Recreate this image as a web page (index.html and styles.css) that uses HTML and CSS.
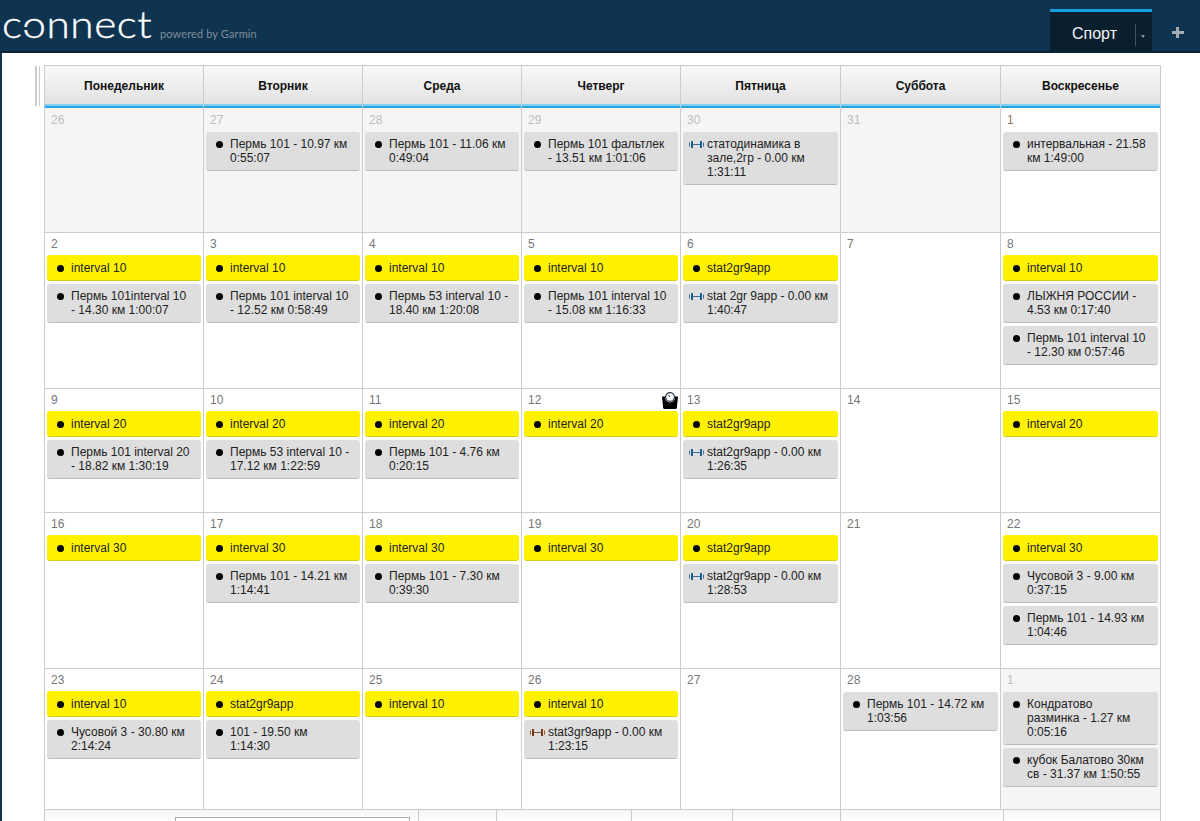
FILE: index.html
```html
<!DOCTYPE html>
<html lang="ru">
<head>
<meta charset="utf-8">
<title>Garmin Connect</title>
<link rel="stylesheet" href="styles.css">
</head>
<body>
<svg class="defs" width="0" height="0" aria-hidden="true">
  <symbol id="db" viewBox="0 0 15 7">
    <rect x="0" y="1.5" width="1" height="4" opacity=".85"/><rect x="2" y="0" width="2" height="7"/>
    <rect x="4" y="3" width="7" height="1" opacity=".85"/>
    <rect x="11" y="0" width="2" height="7"/><rect x="14" y="1.5" width="1" height="4" opacity=".85"/>
  </symbol>
</svg>
<header class="nav">
  <div class="brand"><span class="logo">c<span class="logo-o">o</span>nnect</span><span class="powered">powered by Garmin</span></div>
  <div class="tab"><span class="tab-label">Спорт</span><span class="tab-sep"></span><span class="tab-caret"></span></div>
  <div class="plus"><span class="plus-h"></span><span class="plus-v"></span></div>
</header>
<div class="peek"><i class="p1"></i><i class="p2"></i><i class="p3"></i><i class="p4"></i></div>
<main class="page">
  <div class="handle"></div>
  <div class="cal">
    <div class="head">Понедельник</div><div class="head">Вторник</div><div class="head">Среда</div><div class="head">Четверг</div><div class="head">Пятница</div><div class="head">Суббота</div><div class="head last">Воскресенье</div>

    <div class="cell past r1"><div class="num">26</div></div>
    <div class="cell past r1"><div class="num">27</div><div class="item dot">Пермь 101 - 10.97 км 0:55:07</div></div>
    <div class="cell past r1"><div class="num">28</div><div class="item dot">Пермь 101 - 11.06 км 0:49:04</div></div>
    <div class="cell past r1"><div class="num">29</div><div class="item dot">Пермь 101 фальтлек<br>- 13.51 км 1:01:06</div></div>
    <div class="cell past r1"><div class="num">30</div><div class="item gym"><svg class="db"><use href="#db"/></svg>статодинамика в зале,2гр - 0.00 км 1:31:11</div></div>
    <div class="cell past r1"><div class="num">31</div></div>
    <div class="cell last r1"><div class="num dark">1</div><div class="item dot">интервальная - 21.58 км 1:49:00</div></div>

    <div class="cell r2"><div class="num">2</div><div class="item plan">interval 10</div><div class="item dot">Пермь 101interval 10<br>- 14.30 км 1:00:07</div></div>
    <div class="cell r2"><div class="num">3</div><div class="item plan">interval 10</div><div class="item dot">Пермь 101 interval 10 - 12.52 км 0:58:49</div></div>
    <div class="cell r2"><div class="num">4</div><div class="item plan">interval 10</div><div class="item dot">Пермь 53 interval 10 - 18.40 км 1:20:08</div></div>
    <div class="cell r2"><div class="num">5</div><div class="item plan">interval 10</div><div class="item dot">Пермь 101 interval 10 - 15.08 км 1:16:33</div></div>
    <div class="cell r2"><div class="num">6</div><div class="item plan">stat2gr9app</div><div class="item gym"><svg class="db"><use href="#db"/></svg>stat 2gr 9app - 0.00 км 1:40:47</div></div>
    <div class="cell r2"><div class="num">7</div></div>
    <div class="cell last r2"><div class="num">8</div><div class="item plan">interval 10</div><div class="item dot">ЛЫЖНЯ РОССИИ - 4.53 км 0:17:40</div><div class="item dot">Пермь 101 interval 10<br>- 12.30 км 0:57:46</div></div>

    <div class="cell r3"><div class="num">9</div><div class="item plan">interval 20</div><div class="item dot">Пермь 101 interval 20 - 18.82 км 1:30:19</div></div>
    <div class="cell r3"><div class="num">10</div><div class="item plan">interval 20</div><div class="item dot">Пермь 53 interval 10 - 17.12 км 1:22:59</div></div>
    <div class="cell r3"><div class="num">11</div><div class="item plan">interval 20</div><div class="item dot">Пермь 101 - 4.76 км 0:20:15</div></div>
    <div class="cell r3 has-scale"><div class="num">12</div>
      <svg class="scale" viewBox="0 0 16 17" aria-hidden="true">
        <path d="M0 4.500h3v1a5 5 0 0 0 10 0v-1h3l-1.200 11.500a1.200 1.200 0 0 1-1.200 1H2.400a1.200 1.200 0 0 1-1.200-1z" fill="#000"/>
        <circle cx="8" cy="5" r="4.400" fill="#fff" stroke="#2a3a4a" stroke-width="1.300"/>
        <path d="M8 5 6.400 2.800" stroke="#2a3a4a" stroke-width="1" fill="none"/>
      </svg>
      <div class="item plan">interval 20</div></div>
    <div class="cell r3"><div class="num">13</div><div class="item plan">stat2gr9app</div><div class="item gym"><svg class="db"><use href="#db"/></svg>stat2gr9app - 0.00 км 1:26:35</div></div>
    <div class="cell r3"><div class="num">14</div></div>
    <div class="cell last r3"><div class="num">15</div><div class="item plan">interval 20</div></div>

    <div class="cell r4"><div class="num">16</div><div class="item plan">interval 30</div></div>
    <div class="cell r4"><div class="num">17</div><div class="item plan">interval 30</div><div class="item dot">Пермь 101 - 14.21 км 1:14:41</div></div>
    <div class="cell r4"><div class="num">18</div><div class="item plan">interval 30</div><div class="item dot">Пермь 101 - 7.30 км 0:39:30</div></div>
    <div class="cell r4"><div class="num">19</div><div class="item plan">interval 30</div></div>
    <div class="cell r4"><div class="num">20</div><div class="item plan">stat2gr9app</div><div class="item gym"><svg class="db"><use href="#db"/></svg>stat2gr9app - 0.00 км 1:28:53</div></div>
    <div class="cell r4"><div class="num">21</div></div>
    <div class="cell last r4"><div class="num">22</div><div class="item plan">interval 30</div><div class="item dot">Чусовой 3 - 9.00 км 0:37:15</div><div class="item dot">Пермь 101 - 14.93 км 1:04:46</div></div>

    <div class="cell r5"><div class="num">23</div><div class="item plan">interval 10</div><div class="item dot">Чусовой 3 - 30.80 км 2:14:24</div></div>
    <div class="cell r5"><div class="num">24</div><div class="item plan">stat2gr9app</div><div class="item dot">101 - 19.50 км<br>1:14:30</div></div>
    <div class="cell r5"><div class="num">25</div><div class="item plan">interval 10</div></div>
    <div class="cell r5"><div class="num">26</div><div class="item plan">interval 10</div><div class="item gym strength"><svg class="db"><use href="#db"/></svg>stat3gr9app - 0.00 км 1:23:15</div></div>
    <div class="cell r5"><div class="num">27</div></div>
    <div class="cell r5"><div class="num">28</div><div class="item dot">Пермь 101 - 14.72 км 1:03:56</div></div>
    <div class="cell past last r5"><div class="num">1</div><div class="item dot">Кондратово<br>разминка - 1.27 км<br>0:05:16</div><div class="item dot">кубок Балатово 30км св - 31.37 км 1:50:55</div></div>
  </div>
  <div class="foot">
    <div class="f f1"><span class="field"></span></div>
    <div class="f f2"></div><div class="f f3"></div><div class="f f4"></div><div class="f f5"></div><div class="f f6"></div><div class="f f7"></div>
  </div>
</main>
</body>
</html>
```

FILE: styles.css
```css
* { box-sizing: border-box; }
html, body { margin: 0; padding: 0; height: 821px; overflow: hidden; }
body { background: #0f3450; font-family: "Liberation Sans", Arial, sans-serif; font-size: 12px; color: #222; }
.defs { position: absolute; }

.nav { height: 53px; background: #0f3450; border-bottom: 2px solid #0b2434; display: flex; align-items: flex-start; }
.brand { width: 1050px; display: flex; align-items: flex-start; }
.logo { width: 158px; flex: none; font-family: Lato, sans-serif; font-weight: 300; font-size: 37px; line-height: 40px; letter-spacing: .5px; color: #fff; -webkit-text-stroke: .35px #fff; margin: 4px 0 0 2px; transform: scaleX(1.145); transform-origin: left center; }
.logo-o { position: relative; }
.logo-o::after { content: ""; position: absolute; left: 0; top: 26px; width: 4px; height: 3px; background: #0f3450; }
.powered { font-family: Lato, sans-serif; font-size: 11px; line-height: 12px; letter-spacing: .12px; color: #7f8d98; margin: 28px 0 0 0; }
.tab { width: 102px; height: 42px; margin-top: 9px; background: #0a1f2e; border-top: 3px solid #1a9fe0; display: flex; align-items: flex-start; position: relative; }
.tab-label { font-size: 16px; line-height: 18px; color: #f2f4f6; margin: 13px 0 0 22px; }
.tab-sep { width: 1px; height: 22px; background: #43525e; margin: 12px 0 0 18px; }
.tab-caret { width: 0; height: 0; border: 2px solid transparent; border-top: 3px solid #8b98a3; border-bottom: 0; margin: 23px 0 0 5px; }
.plus { width: 12px; height: 12px; margin: 27px 0 0 20px; position: relative; }
.plus-h, .plus-v { position: absolute; background: #a2acb4; }
.plus-h { left: 0; right: 0; top: 4px; height: 3px; }
.plus-v { top: 0; bottom: 1px; left: 4px; width: 3px; }

.peek { height: 0; position: relative; }
.peek i { position: absolute; top: 0; height: 1px; background: #9fb0bc; }
.p1 { left: 192px; width: 75px; }
.p2 { left: 281px; width: 55px; }
.p3 { left: 1007px; width: 66px; }
.p4 { left: 1135px; width: 24px; }

.page { margin-left: 2px; height: 768px; background: #fff; padding: 12px 0 0 33px; position: relative; }
.handle { position: absolute; left: 33px; top: 13px; width: 5px; height: 40px; border-left: 2px solid #ccc; border-right: 1px solid #ccc; }
.cal { margin-left: 9px; width: 1117px; display: grid; grid-template-columns: 159px 159px 159px 159px 160px 160px 161px; grid-template-rows: 42px 125px 156px 124px 156px 141px; border-top: 1px solid #ccc; }

.head { position: relative; border-left: 1px solid #ccc; background: linear-gradient(#fafafa, #dfdfdf); font-weight: bold; font-size: 12px; text-align: center; line-height: 41px; color: #111; }
.head::after { content: ""; position: absolute; left: 0; right: 0; bottom: 0; height: 4px; background: linear-gradient(#7fd0f5 50%, #28a4e2 50%); }
.head.last { border-right: 1px solid #ccc; }

.cell { border-left: 1px solid #ccc; border-bottom: 1px solid #ccc; padding: 0 2px; background: #fff; position: relative; overflow: hidden; }
.cell.last { border-right: 1px solid #ccc; }
.cell.past { background: #f5f5f5; }
.num { height: 23px; padding: 4px 0 0 4px; font-size: 12px; line-height: 14px; color: #77777a; }
.r1 .num { height: 24px; padding-top: 5px; }
.cell.past .num { color: #bdbdbd; }
.num.dark { color: #8a7a60; }

.item { position: relative; background: #dedede; border-bottom: 1px solid #bbb; border-radius: 3px; padding: 5px 6px 5px 24px; line-height: 14px; font-size: 12px; color: #222; margin-bottom: 3px; }
.item.dot::before, .item.plan::before { content: ""; position: absolute; left: 9.700px; top: 8.700px; width: 7.600px; height: 7.600px; border-radius: 50%; background: #000; }
.item.plan { background: #fff200; border-bottom-color: #d8cd10; margin-top: -1px; padding-top: 6px; }
.item.plan::before { top: 9.700px; }
.db { position: absolute; left: 6px; top: 9px; width: 15px; height: 7px; fill: #1f5f8e; }
.strength .db { fill: #7a3a1a; }
.scale { position: absolute; right: 2px; top: 3px; width: 16px; height: 17px; }

.foot { margin-left: 9px; width: 1117px; height: 12px; display: flex; background: linear-gradient(#f6f6f6, #fff); }
.f { border-left: 1px solid #ccc; height: 100%; position: relative; }
.f1 { width: 374px; padding: 7px 0 0 130px; }
.f2 { width: 78px; }
.f3 { width: 135px; }
.f4 { width: 101px; }
.f5 { width: 108px; }
.f6 { width: 163px; }
.f7 { width: 158px; border-right: 1px solid #ccc; }
.field { display: block; width: 235px; height: 12px; background: #fff; border: 1px solid #aaa; }
```
